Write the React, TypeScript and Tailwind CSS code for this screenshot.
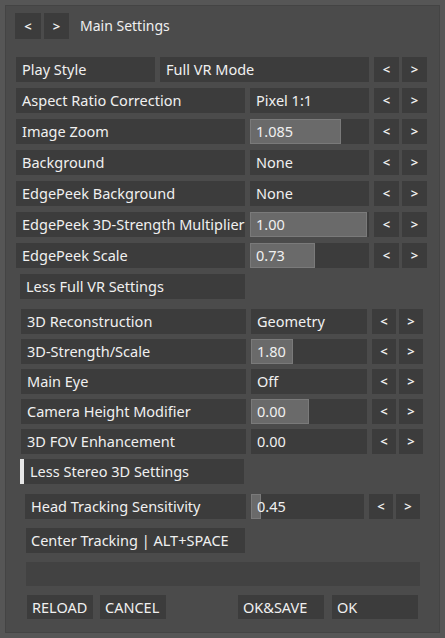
import React from 'react';

type Row = {
  label: string;
  value: string;
  fill?: number; // slider fill width in px, measured from the reference
};

const mainRows: Row[] = [
  { label: 'Aspect Ratio Correction', value: 'Pixel 1:1' },
  { label: 'Image Zoom', value: '1.085', fill: 91 },
  { label: 'Background', value: 'None' },
  { label: 'EdgePeek Background', value: 'None' },
  { label: 'EdgePeek 3D-Strength Multiplier', value: '1.00', fill: 117 },
  { label: 'EdgePeek Scale', value: '0.73', fill: 65 },
];

const stereoRows: Row[] = [
  { label: '3D Reconstruction', value: 'Geometry' },
  { label: '3D-Strength/Scale', value: '1.80', fill: 42 },
  { label: 'Main Eye', value: 'Off' },
  { label: 'Camera Height Modifier', value: '0.00', fill: 58 },
  { label: '3D FOV Enhancement', value: '0.00' },
];

const cell = 'bg-[#3c3c3c] flex items-center';

function ArrowPair({ w }: { w: string }) {
  return (
    <div className="flex gap-[3px] shrink-0">
      <div className={`${cell} ${w} justify-center font-semibold text-[13px]`}>&lt;</div>
      <div className={`${cell} ${w} justify-center font-semibold text-[13px]`}>&gt;</div>
    </div>
  );
}

function SettingRow({ row, valueW, arrowW }: { row: Row; valueW: string; arrowW: string }) {
  return (
    <div className="flex h-[25px] gap-[5px]">
      <div className={`${cell} flex-1 pl-[6px] whitespace-nowrap`}>{row.label}</div>
      <div className={`${cell} ${valueW} relative shrink-0`}>
        {row.fill !== undefined && (
          <div
            className="absolute left-0 top-0 h-full bg-[#6a6a6a] border border-[#7a7a7a]"
            style={{ width: row.fill }}
          />
        )}
        <span className="relative pl-[6px]">{row.value}</span>
      </div>
      <ArrowPair w={arrowW} />
    </div>
  );
}

export default function App() {
  return (
    <div
      className="w-[445px] h-[638px] bg-[#565656] p-[5px] text-[#f0f0f0] text-[14.5px] leading-none"
      style={{ fontFamily: '"Noto Sans", "Open Sans", sans-serif' }}
    >
      <div className="h-full bg-[#4b4b4b] border border-[#444444]">
        {/* header */}
        <div className="flex items-center mt-[7px] ml-[9px] h-[26px]">
          <div className={`${cell} w-[26px] h-full justify-center font-semibold text-[13px]`}>&lt;</div>
          <div className={`${cell} w-[25px] h-full justify-center font-semibold text-[13px] ml-[3px]`}>&gt;</div>
          <span className="ml-[11px] text-[14px]">Main Settings</span>
        </div>

        {/* full VR settings */}
        <div className="mt-[18px] ml-[10px] mr-[12px] flex flex-col gap-[6px]">
          <div className="flex h-[25px] gap-[5px]">
            <div className={`${cell} w-[139px] pl-[6px]`}>Play Style</div>
            <div className={`${cell} flex-1 pl-[6px]`}>Full VR Mode</div>
            <ArrowPair w="w-[25px]" />
          </div>
          {mainRows.map((row) => (
            <SettingRow key={row.label} row={row} valueW="w-[119px]" arrowW="w-[25px]" />
          ))}
          <div className="flex h-[25px]">
            <div className={`${cell} w-[225px] ml-[4px] pl-[6px]`}>Less Full VR Settings</div>
          </div>
        </div>

        {/* stereo 3D settings */}
        <div className="mt-[10px] ml-[15px] mr-[16px] flex flex-col gap-[5px]">
          {stereoRows.map((row) => (
            <SettingRow key={row.label} row={row} valueW="w-[116px]" arrowW="w-[24px]" />
          ))}
          <div className="flex h-[25px]">
            <div className="w-[4px] bg-[#e6e6e6] ml-[-1px]" />
            <div className={`${cell} w-[220px] pl-[6px]`}>Less Stereo 3D Settings</div>
          </div>
        </div>

        {/* tracking + buttons */}
        <div className="mt-[10px] ml-[19px] mr-[19px] flex flex-col gap-[9px]">
          <SettingRow
            row={{ label: 'Head Tracking Sensitivity', value: '0.45', fill: 10 }}
            valueW="w-[113px]"
            arrowW="w-[24px]"
          />
          <div className="flex h-[25px]">
            <div className={`${cell} w-[219px] ml-[1px] pl-[5px]`}>Center Tracking | ALT+SPACE</div>
          </div>
          <div className="h-[24px] bg-[#424242] ml-[1px]" />
          <div className="flex h-[24px] ml-[2px]">
            <div className={`${cell} w-[66px] pl-[5px]`}>RELOAD</div>
            <div className={`${cell} w-[66px] pl-[5px] ml-[7px]`}>CANCEL</div>
            <div className={`${cell} w-[86px] pl-[5px] ml-[72px]`}>OK&amp;SAVE</div>
            <div className={`${cell} w-[86px] pl-[5px] ml-[8px]`}>OK</div>
          </div>
        </div>
      </div>
    </div>
  );
}
